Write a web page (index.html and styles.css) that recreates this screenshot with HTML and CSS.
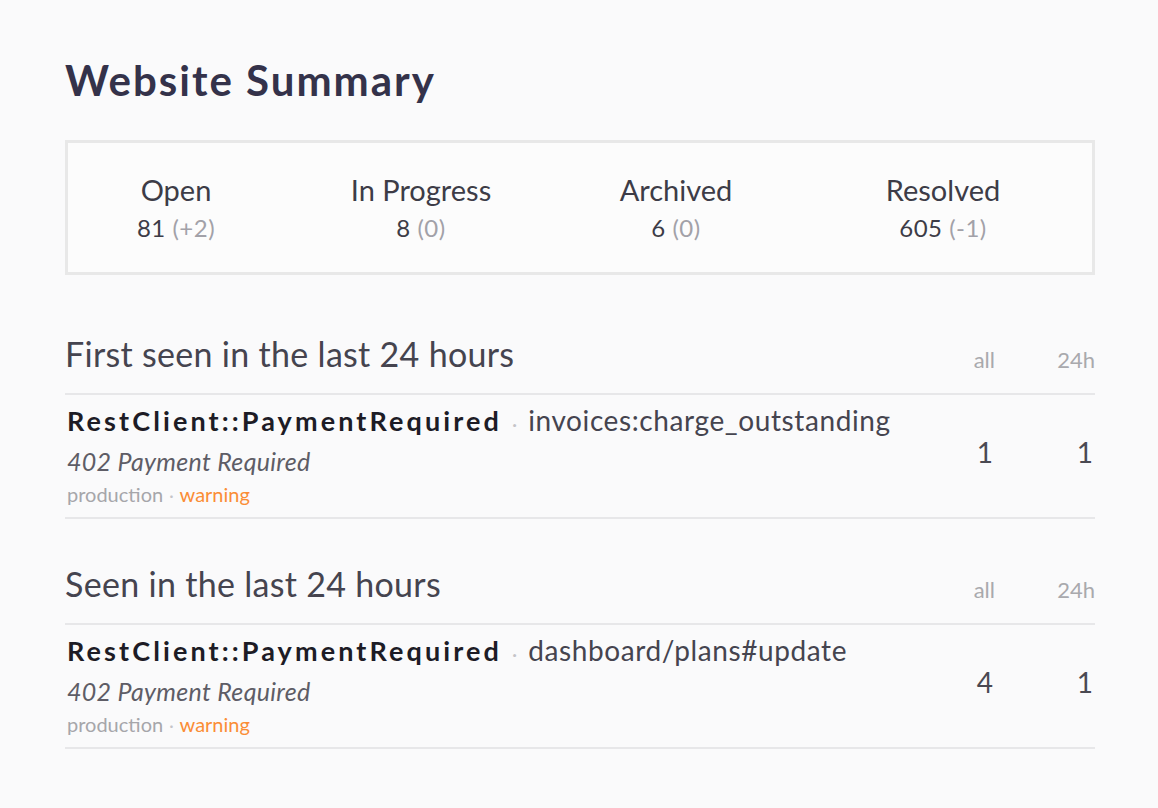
FILE: index.html
```html
<!DOCTYPE html>
<html lang="en">
<head>
<meta charset="utf-8">
<title>Website Summary</title>
<link rel="stylesheet" href="styles.css">
</head>
<body>
<main class="page">
  <h1 class="title">Website Summary</h1>

  <div class="stats">
    <div class="stat">
      <div class="stat-label">Open</div>
      <div class="stat-value">81 <span class="delta">(+2)</span></div>
    </div>
    <div class="stat">
      <div class="stat-label">In Progress</div>
      <div class="stat-value">8 <span class="delta">(0)</span></div>
    </div>
    <div class="stat">
      <div class="stat-label">Archived</div>
      <div class="stat-value">6 <span class="delta">(0)</span></div>
    </div>
    <div class="stat">
      <div class="stat-label">Resolved</div>
      <div class="stat-value">605 <span class="delta">(-1)</span></div>
    </div>
  </div>

  <section class="group">
    <div class="group-head">
      <h2 class="group-title">First seen in the last 24 hours</h2>
      <span class="col col-head">all</span>
      <span class="col col-head">24h</span>
    </div>
    <div class="issue">
      <div class="issue-info">
        <div class="issue-line"><span class="issue-name">RestClient::PaymentRequired</span><span class="sep">·</span><span class="issue-route">invoices:charge_outstanding</span></div>
        <div class="issue-msg">402 Payment Required</div>
        <div class="issue-tags"><span class="env">production</span><span class="sep small">·</span><span class="level">warning</span></div>
      </div>
      <span class="col num">1</span>
      <span class="col num">1</span>
    </div>
  </section>

  <section class="group">
    <div class="group-head">
      <h2 class="group-title">Seen in the last 24 hours</h2>
      <span class="col col-head">all</span>
      <span class="col col-head">24h</span>
    </div>
    <div class="issue">
      <div class="issue-info">
        <div class="issue-line"><span class="issue-name">RestClient::PaymentRequired</span><span class="sep">·</span><span class="issue-route">dashboard/plans#update</span></div>
        <div class="issue-msg">402 Payment Required</div>
        <div class="issue-tags"><span class="env">production</span><span class="sep small">·</span><span class="level">warning</span></div>
      </div>
      <span class="col num">4</span>
      <span class="col num">1</span>
    </div>
  </section>
</main>
</body>
</html>
```

FILE: styles.css
```css
* { box-sizing: border-box; }
html, body {
  margin: 0;
  padding: 0;
  background: #fafafb;
}
body {
  font-family: "Lato", "Noto Sans", sans-serif;
  color: #45444f;
}
.page {
  width: 1030px;
  margin-left: 65px;
  padding-top: 52px;
}
.title {
  margin: 0;
  font-size: 42px;
  line-height: 56px;
  font-weight: 700;
  color: #34324a;
  letter-spacing: 2px;
}
.stats {
  margin-top: 32px;
  height: 135px;
  border: 3px solid #e8e8e8;
  background: #fcfcfc;
  display: grid;
  grid-template-columns: 216px 274px 236px 1fr;
  align-content: start;
  padding-top: 28px;
}
.stat {
  text-align: center;
}
.stat-label {
  font-size: 29px;
  line-height: 38px;
  color: #3d3c47;
}
.stat-value {
  margin-top: 4px;
  font-size: 24px;
  line-height: 30px;
  color: #3d3c47;
  letter-spacing: 0.5px;
}
.delta { color: #a2a1a8; }

.group {
  margin-top: 58px;
}
.group + .group { margin-top: 44px; }
.group-head {
  display: flex;
  align-items: flex-end;
  border-bottom: 2px solid #e7e7e9;
  padding-bottom: 18px;
}
.group-title {
  flex: 1;
  margin: 0;
  font-size: 34px;
  line-height: 42px;
  font-weight: 400;
  color: #45444f;
  letter-spacing: 0.3px;
}
.col {
  width: 100px;
  text-align: right;
  flex: none;
}
.col-head {
  font-size: 22px;
  line-height: 30px;
  color: #a9a9ad;
}
.issue {
  display: flex;
  align-items: center;
  border-bottom: 2px solid #e7e7e9;
  padding: 5px 0 6px;
}
.issue-info {
  flex: 1;
  padding-left: 2px;
}
.issue-line {
  display: flex;
  align-items: baseline;
  line-height: 40px;
}
.issue-name {
  font-size: 27px;
  font-weight: 700;
  letter-spacing: 3.1px;
  color: #1d1c26;
}
.sep {
  color: #c4c4c8;
  font-size: 20px;
  margin: 0 11px 0 10px;
}
.sep.small {
  font-size: 17px;
  margin: 0 6px;
}
.issue-route {
  font-size: 28px;
  letter-spacing: 0.6px;
  color: #45444f;
}
.issue-msg {
  font-size: 25px;
  line-height: 36px;
  font-style: italic;
  color: #5e5d66;
  letter-spacing: 0.3px;
}
.issue-tags {
  font-size: 20px;
  line-height: 30px;
}
.env { color: #a6a6aa; }
.level { color: #fa8d36; }
.num {
  font-size: 28px;
  color: #4a4952;
  padding-right: 2px;
  padding-bottom: 8px;
}
```
